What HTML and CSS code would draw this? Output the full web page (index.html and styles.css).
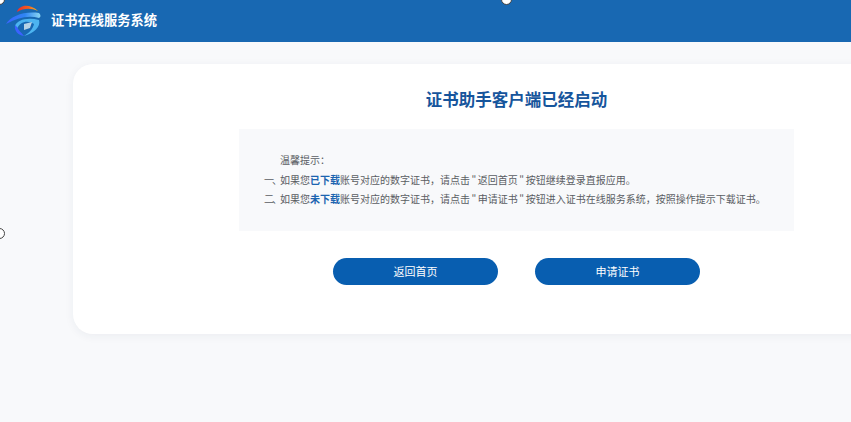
FILE: index.html
```html
<!DOCTYPE html>
<html lang="zh-CN">
<head>
<meta charset="utf-8">
<title>证书在线服务系统</title>
<link rel="stylesheet" href="styles.css">
</head>
<body>
<header class="topbar">
  <svg class="logo" width="38" height="36" viewBox="4 3 38 36" aria-hidden="true">
    <defs>
      <linearGradient id="arc" x1="0" y1="0" x2="1" y2="0">
        <stop offset="0" stop-color="#ee2a2c"/>
        <stop offset=".55" stop-color="#f2601f"/>
        <stop offset="1" stop-color="#f6bb22"/>
      </linearGradient>
      <linearGradient id="band" x1="0" y1="0" x2="1" y2="0">
        <stop offset="0" stop-color="#3a62ff"/>
        <stop offset=".55" stop-color="#2f86f4"/>
        <stop offset="1" stop-color="#8ad6f2"/>
      </linearGradient>
    </defs>
    <path d="M17 12C19 5 29 3 38 11C31 8 24 8 17 12Z" fill="url(#arc)"/>
    <path d="M6 24C11 16 24 11 39 13C41 15 41 17 39 18C28 15 17 18 6 24Z" fill="url(#band)"/>
    <path d="M15 26C17 20 27 17 39 20C41 27 34 33 24 36C29 33 33 29 34 24C28 20 20 21 17 29Z" fill="#4cb4f0"/>
    <path d="M15 25C14 31 18 35 24 36C21 32 18 30 17 27Z" fill="#3a62ff"/>
    <path d="M24 24L32 22L30 28L24 30Z" fill="#b6d3e6"/>
  </svg>
  <span class="brand">证书在线服务系统</span>
</header>
<span class="dot dot-corner"></span>
<span class="dot dot-top"></span>
<span class="dot dot-left"></span>
<main class="page">
  <section class="card">
    <h1 class="title">证书助手客户端已经启动</h1>
    <div class="notice">
      <p class="line line-head">温馨提示：</p>
      <p class="line"><span class="num">一、</span>如果您<b class="hl">已下载</b>账号对应的数字证书，请点击 " 返回首页 " 按钮继续登录直报应用。</p>
      <p class="line"><span class="num">二、</span>如果您<b class="hl">未下载</b>账号对应的数字证书，请点击 " 申请证书 " 按钮进入证书在线服务系统，按照操作提示下载证书。</p>
    </div>
    <div class="actions">
      <a class="btn">返回首页</a>
      <a class="btn">申请证书</a>
    </div>
  </section>
</main>
</body>
</html>
```
FILE: styles.css
```css
* { box-sizing: border-box; }
html, body { margin: 0; height: 100%; }
body {
  background: #f8f9fb;
  font-family: "Noto Sans CJK SC", "Liberation Sans", sans-serif;
  overflow: hidden;
  position: relative;
}
.topbar {
  height: 42px;
  background: #1868b2;
  display: flex;
  align-items: center;
  padding-left: 4px;
  gap: 9px;
}
.logo { flex: none; }
.brand {
  color: #fff;
  font-size: 13.25px;
  font-weight: 700;
  margin-top: -4px;
}
.page { padding: 22px 0 0 73px; }
.card {
  width: 800px;
  height: 270px;
  background: #fff;
  border-radius: 20px 0 0 20px;
  box-shadow: 0 2px 10px rgba(30, 50, 90, .06);
  padding: 22px 79px 0 166px;
}
.title {
  margin: 0;
  height: 43px;
  font-size: 16.5px;
  line-height: 26px;
  font-weight: 700;
  color: #16559c;
  text-align: center;
}
.notice {
  width: 555px;
  height: 102px;
  background: #f8f9fb;
  padding: 21px 0 0 25px;
}
.line {
  margin: 0;
  font-size: 10px;
  line-height: 19.5px;
  color: #5a5d63;
  white-space: nowrap;
  word-spacing: -.7px;
}
.num { letter-spacing: -2px; }
.line-head { padding-left: 16px; }
.hl { color: #1c64b0; font-weight: 700; }
.actions {
  display: flex;
  justify-content: center;
  gap: 37px;
  margin-top: 27px;
}
.btn {
  width: 165px;
  height: 27px;
  border-radius: 14px;
  background: #085eb0;
  color: #fff;
  font-size: 11px;
  line-height: 26px;
  text-align: center;
}
.dot {
  position: absolute;
  background: #fff;
  border: 1px solid #444;
  border-radius: 50%;
}
.dot-corner { left: -6px; top: -6px; width: 11px; height: 11px; }
.dot-top { left: 501px; top: -6px; width: 11px; height: 11px; }
.dot-left { left: -6px; top: 228px; width: 11px; height: 11px; }
```
